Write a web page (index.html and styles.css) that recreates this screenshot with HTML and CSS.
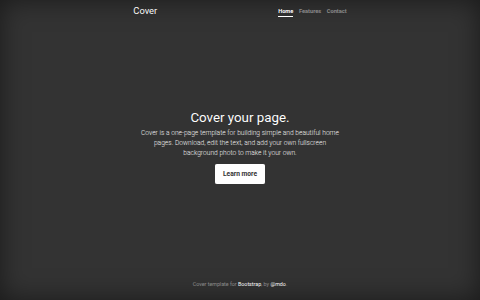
FILE: index.html
```html
<!DOCTYPE html>
<html lang="en">
<head>
<meta charset="utf-8">
<title>Cover</title>
<link rel="stylesheet" href="styles.css">
</head>
<body>
<div class="cover-container">
  <header class="masthead">
    <h3 class="brand">Cover</h3>
    <nav class="nav-masthead">
      <a class="nav-link active" href="#">Home</a>
      <a class="nav-link" href="#">Features</a>
      <a class="nav-link" href="#">Contact</a>
    </nav>
  </header>
  <main class="hero">
    <h1 class="title">Cover your page.</h1>
    <p class="lead">Cover is a one-page template for building simple and beautiful home pages. Download, edit the text, and add your own fullscreen background photo to make it your own.</p>
    <p class="lead"><a href="#" class="btn">Learn more</a></p>
  </main>
  <footer class="footer">
    <p>Cover template for <a href="#">Bootstrap</a>, by <a href="#">@mdo</a>.</p>
  </footer>
</div>
</body>
</html>
```
FILE: styles.css
```css
html, body {
  height: 100%;
}
body {
  margin: 0;
  display: flex;
  background-color: #333;
  color: #fff;
  font-family: Roboto, "Liberation Sans", sans-serif;
  font-size: 5.333px;
  line-height: 1.5;
  text-shadow: 0 0.27px 0.53px rgba(0, 0, 0, 0.5);
  box-shadow: inset 0 0 26.67px rgba(0, 0, 0, 0.5);
}
.cover-container {
  display: flex;
  flex-direction: column;
  width: 100%;
  max-width: 224px;
  height: 100%;
  margin: 0 auto;
  padding: 5.333px;
  box-sizing: border-box;
}
.masthead {
  margin-bottom: auto;
  display: flex;
  justify-content: space-between;
  align-items: flex-start;
}
.brand {
  margin: 0;
  font-size: 9.333px;
  font-weight: 400;
  line-height: 1.2;
}
.nav-masthead {
  display: flex;
  gap: 5.667px;
}
.nav-link {
  display: block;
  padding: 1.333px 0;
  font-size: 5.667px;
  font-weight: 700;
  color: rgba(255, 255, 255, 0.5);
  text-decoration: none;
  border-bottom: 1.333px solid transparent;
}
.nav-link.active {
  color: #fff;
  border-bottom-color: #fff;
}
.hero {
  padding: 0 5.333px;
  text-align: center;
}
.title {
  margin: 0 0 2.667px;
  font-size: 13.333px;
  font-weight: 400;
  line-height: 1.2;
}
.lead {
  margin: 0 0 5.333px;
  font-size: 6.667px;
  font-weight: 300;
}
.btn {
  display: inline-block;
  padding: 4px 7.333px;
  font-size: 6.667px;
  font-weight: 700;
  line-height: 1.5;
  color: #333;
  background: #fff;
  border: 0.333px solid #fff;
  border-radius: 1.333px;
  text-decoration: none;
  text-shadow: none;
  vertical-align: middle;
}
.footer {
  margin-top: auto;
  text-align: center;
  color: rgba(255, 255, 255, 0.5);
}
.footer p {
  margin: 0 0 5.333px;
}
.footer a {
  color: #fff;
  text-decoration: none;
}
```
